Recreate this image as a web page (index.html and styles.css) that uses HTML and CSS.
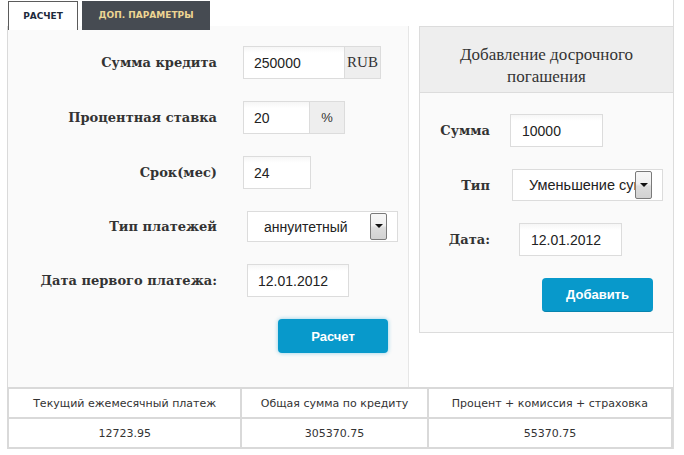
FILE: index.html
```html
<!DOCTYPE html>
<html lang="ru">
<head>
<meta charset="utf-8">
<title>Кредитный калькулятор</title>
<link rel="stylesheet" href="styles.css">
</head>
<body>
<div class="wrap">
  <div class="tabs">
    <div class="tab tab-active">РАСЧЕТ</div>
    <div class="tab tab-dark">ДОП. ПАРАМЕТРЫ</div>
  </div>
  <div class="main">
    <div class="calc">
      <div class="form form-main">
        <div class="lbl">Сумма кредита</div>
        <div class="group">
          <input class="inp inp-sum" type="text" value="250000">
          <span class="addon addon-rub">RUB</span>
        </div>

        <div class="lbl">Процентная ставка</div>
        <div class="group">
          <input class="inp inp-rate" type="text" value="20">
          <span class="addon addon-pct">%</span>
        </div>

        <div class="lbl">Срок(мес)</div>
        <div class="group">
          <input class="inp inp-term" type="text" value="24">
        </div>

        <div class="lbl">Тип платежей</div>
        <div class="group">
          <div class="sel sel-main">
            <span class="sel-text">аннуитетный</span>
            <span class="sel-btn"><span class="arrow"></span></span>
          </div>
        </div>

        <div class="lbl">Дата первого платежа:</div>
        <div class="group">
          <input class="inp inp-date" type="text" value="12.01.2012">
        </div>

        <div class="lbl"></div>
        <div class="group">
          <button class="btn btn-calc" type="button">Расчет</button>
        </div>
      </div>
    </div>
    <div class="side">
      <div class="box">
        <div class="box-head">Добавление досрочного<br>погашения</div>
        <div class="box-body">
          <div class="form form-side">
            <div class="lbl">Сумма</div>
            <div class="group">
              <input class="inp inp-amount" type="text" value="10000">
            </div>

            <div class="lbl">Тип</div>
            <div class="group">
              <div class="sel sel-side">
                <span class="sel-text">Уменьшение суммы</span>
                <span class="sel-btn"><span class="arrow"></span></span>
              </div>
            </div>

            <div class="lbl">Дата:</div>
            <div class="group">
              <input class="inp inp-date2" type="text" value="12.01.2012">
            </div>

            <div class="lbl"></div>
            <div class="group">
              <button class="btn btn-add" type="button">Добавить</button>
            </div>
          </div>
        </div>
      </div>
    </div>
  </div>
  <table class="results">
    <colgroup>
      <col class="c1">
      <col class="c2">
      <col class="c3">
    </colgroup>
    <tr class="r-head">
      <td>Текущий ежемесячный платеж</td>
      <td>Общая сумма по кредиту</td>
      <td>Процент + комиссия + страховка</td>
    </tr>
    <tr class="r-data">
      <td>12723.95</td>
      <td>305370.75</td>
      <td>55370.75</td>
    </tr>
  </table>
</div>
</body>
</html>
```

FILE: styles.css
```css
html, body {
  margin: 0;
  padding: 0;
  background: #ffffff;
}

body {
  font-family: "Liberation Sans", Arial, sans-serif;
  color: #333333;
}

.wrap {
  margin-left: 7px;
  width: 667px;
  border-right: 1px solid #dcdcdc;
  box-sizing: border-box;
}

/* Tabs */
.tabs {
  display: flex;
  gap: 4px;
  height: 26px;
  padding: 1px 0 0 1px;
  box-sizing: border-box;
  position: relative;
  z-index: 1;
}

.tab {
  height: 29px;
  box-sizing: border-box;
  font-family: "DejaVu Sans", Verdana, sans-serif;
  font-weight: bold;
  font-size: 9px;
  line-height: 29px;
  text-align: center;
  flex: none;
}

.tab-active {
  width: 70px;
  background: #ffffff;
  border: 1px solid #5b5b5b;
  border-bottom: none;
  color: #1d2a3b;
  line-height: 28px;
}

.tab-dark {
  width: 128px;
  background: #464b52;
  color: #edd592;
}

/* Main area */
.main {
  display: flex;
}

.calc {
  width: 402px;
  height: 361px;
  box-sizing: border-box;
  flex: none;
  background: #fafafa;
  border-left: 1px solid #dadada;
  border-right: 1px solid #e6e6e6;
  padding-top: 20px;
}

.side {
  flex: 1;
  padding-left: 10px;
  background: #ffffff;
}

.form {
  display: grid;
  align-items: center;
}

.form-main {
  grid-template-columns: 209px auto;
  column-gap: 26px;
  row-gap: 22px;
}

.form-side {
  grid-template-columns: 70px auto;
  column-gap: 20px;
  row-gap: 22px;
}

.lbl {
  font-family: "DejaVu Serif", Georgia, serif;
  font-weight: bold;
  font-size: 13px;
  color: #333333;
  text-align: right;
  white-space: nowrap;
}

.group {
  display: flex;
  align-items: stretch;
}

.inp {
  height: 33px;
  box-sizing: border-box;
  border: 1px solid #dcdcdc;
  background: linear-gradient(#f6f6f6, #ffffff 6px);
  padding: 0 0 0 10px;
  margin: 0;
  font-family: "Liberation Sans", Arial, sans-serif;
  font-size: 14px;
  color: #222222;
  outline: none;
}

.inp-sum { width: 102px; }
.inp-rate { width: 67px; }
.inp-term { width: 68px; }
.inp-date { width: 102px; margin-left: 4px; }
.inp-amount { width: 93px; padding-left: 11px; }
.inp-date2 { width: 103px; margin-left: 9px; padding-left: 11px; }

.addon {
  height: 33px;
  box-sizing: border-box;
  border: 1px solid #dcdcdc;
  border-left: none;
  background: #eeeeee;
  display: flex;
  align-items: center;
  justify-content: center;
  color: #333333;
}

.addon-rub {
  width: 36px;
  font-family: "Liberation Serif", "Times New Roman", serif;
  font-size: 15px;
}

.addon-pct {
  width: 35px;
  font-family: "Liberation Sans", Arial, sans-serif;
  font-size: 13px;
}

/* Select imitation */
.sel {
  width: 151px;
  height: 31px;
  box-sizing: border-box;
  border: 1px solid #dcdcdc;
  background: #ffffff;
  display: flex;
  align-items: center;
  padding: 1px 10px 1px 15px;
}

.sel-main { margin-left: 4px; }
.sel-side { margin-left: 2px; height: 32px; }

.sel-text {
  flex: 1;
  overflow: hidden;
  white-space: nowrap;
  font-family: "Liberation Sans", Arial, sans-serif;
  font-size: 14px;
  color: #222222;
  padding-left: 1px;
}

.sel-side .sel-text {
  font-size: 14.5px;
}

.sel-btn {
  flex: none;
  width: 17px;
  align-self: stretch;
  box-sizing: border-box;
  border: 1px solid #7a7a7a;
  border-radius: 2px;
  background: linear-gradient(#f7f7f7, #f0f0f0 45%, #dcdcdc 55%, #d2d2d2);
  display: flex;
  align-items: center;
  justify-content: center;
}

.arrow {
  width: 0;
  height: 0;
  border-left: 4px solid transparent;
  border-right: 4px solid transparent;
  border-top: 4px solid #111111;
  margin-top: -1px;
}

/* Buttons */
.btn {
  height: 34px;
  border: none;
  border-radius: 4px;
  background: #0899cb;
  color: #ffffff;
  font-family: "Liberation Sans", Arial, sans-serif;
  font-weight: bold;
  font-size: 13px;
  padding: 0;
  margin: 0;
  cursor: pointer;
}

.btn-calc {
  width: 110px;
  margin-left: 35px;
  box-shadow: 0 0 4px rgba(8, 153, 203, 0.45);
}

.btn-add {
  width: 111px;
  margin-left: 32px;
  border-bottom: 1px solid #0784ae;
}

/* Side box */
.box {
  border: 1px solid #dcdcdc;
  border-right: none;
  background: #fafafa;
}

.box-head {
  background: #eeeeee;
  border-bottom: 1px solid #dcdcdc;
  height: 48px;
  padding-top: 17px;
  text-align: center;
  font-family: "Liberation Serif", "Times New Roman", serif;
  font-size: 17px;
  line-height: 22px;
  color: #333333;
}

.box-body {
  padding: 21px 0 20px 0;
}

/* Results table */
.results {
  width: 666px;
  border-collapse: collapse;
  border: 2px solid #d6d6d6;
  background: #ffffff;
  font-family: "DejaVu Sans", Tahoma, sans-serif;
  font-size: 11px;
  color: #333333;
}

.results .c1 { width: 234px; }
.results .c2 { width: 187px; }
.results .c3 { width: 245px; }

.results td {
  border: 2px solid #d9d9d9;
  text-align: center;
  padding: 0;
}

.r-head td { height: 28px; }
.r-data td { height: 28px; }
```
